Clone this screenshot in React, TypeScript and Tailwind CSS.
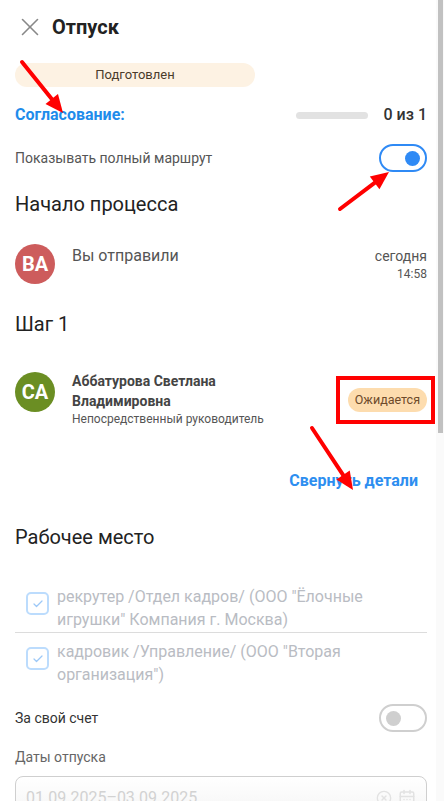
import { X, Check, CalendarDays, CircleX } from "lucide-react";

type Pt = [number, number];

function Arrow({ from, to }: { from: Pt; to: Pt }) {
  const dx = to[0] - from[0];
  const dy = to[1] - from[1];
  const len = Math.hypot(dx, dy);
  const ux = dx / len;
  const uy = dy / len;
  const head = 18;
  const half = 8;
  const bx = to[0] - ux * head;
  const by = to[1] - uy * head;
  const pts = [
    `${to[0]},${to[1]}`,
    `${bx - uy * half},${by + ux * half}`,
    `${bx + uy * half},${by - ux * half}`,
  ].join(" ");
  return (
    <g>
      <line x1={from[0]} y1={from[1]} x2={bx + ux * 2} y2={by + uy * 2} stroke="#ff0000" strokeWidth={4} strokeLinecap="round" />
      <polygon points={pts} fill="#ff0000" />
    </g>
  );
}

function Toggle({ on }: { on: boolean }) {
  return (
    <div
      className={`flex h-[28px] w-[48px] items-center rounded-full border-2 px-[5px] ${
        on ? "justify-end border-[#2f8af5]" : "justify-start border-[#cfcfcf]"
      }`}
    >
      <span className={`h-[15px] w-[15px] rounded-full ${on ? "bg-[#2f8af5]" : "bg-[#cfcfcf]"}`} />
    </div>
  );
}

function Workplace({ lines, divider }: { lines: string; divider?: boolean }) {
  return (
    <div className={`flex gap-[8px] pl-[11px] ${divider ? "border-b border-[#dcdcdc] pb-[1px]" : ""}`}>
      <span className="mt-[7px] flex h-[23px] w-[23px] shrink-0 items-center justify-center rounded-[5px] border-2 border-[#bcdcfd]">
        <Check size={12} strokeWidth={2.5} className="text-[#9cc8f7]" />
      </span>
      <p className="text-[16px] leading-[23px] text-[#b9bcc3]">{lines}</p>
    </div>
  );
}

export default function App() {
  return (
    <div className="relative flex h-[801px] w-[444px] overflow-hidden bg-white font-['Roboto',sans-serif]">
      <div className="w-[436px] pl-[15px] pr-[9px]">
        <header className="flex h-[54px] items-center gap-[7px]">
          <X size={30} strokeWidth={1.3} className="text-[#888]" />
          <h1 className="text-[20px] font-bold text-[#222]">Отпуск</h1>
        </header>

        <div className="mt-[9px] flex h-6 w-[240px] items-center justify-center rounded-full bg-[#fdf2e3] text-[13px] text-[#4a3b2b]">
          Подготовлен
        </div>

        <div className="mt-[14px] flex h-7 items-center">
          <span className="text-[16px] font-bold text-[#1f8ceb]">Согласование:</span>
          <span className="ml-auto h-[7px] w-[72px] rounded-full bg-[#e2e2e2]" />
          <span className="ml-[16px] text-[16px] font-medium text-[#333]">0 из 1</span>
        </div>

        <div className="mt-[15px] flex h-7 items-center justify-between">
          <span className="text-[14px] text-[#555]">Показывать полный маршрут</span>
          <Toggle on />
        </div>

        <h2 className="mt-[18px] text-[20px] leading-[28px] text-[#222]">Начало процесса</h2>

        <div className="mt-[26px] flex items-start gap-[17px]">
          <span className="flex h-10 w-10 shrink-0 items-center justify-center rounded-full bg-[#cd5c5c] text-[20px] font-bold text-white">
            BA
          </span>
          <span className="mt-[1px] text-[16px] leading-[22px] text-[#555]">Вы отправили</span>
          <div className="ml-auto flex flex-col items-end">
            <span className="mt-[2px] text-[14px] leading-[20px] text-[#555]">сегодня</span>
            <span className="text-[12px] leading-[16px] text-[#555]">14:58</span>
          </div>
        </div>

        <h2 className="mt-[26px] text-[20px] leading-[28px] text-[#222]">Шаг 1</h2>

        <div className="mt-[33px] flex items-start gap-[17px]">
          <span className="mt-[1px] flex h-10 w-10 shrink-0 items-center justify-center rounded-full bg-[#6b8e23] text-[20px] font-bold text-white">
            CA
          </span>
          <div className="flex-1">
            <p className="text-[14px] font-bold leading-[20px] text-[#444]">
              Аббатурова Светлана
              <br />
              Владимировна
            </p>
            <p className="text-[12px] leading-[16px] text-[#555]">Непосредственный руководитель</p>
          </div>
          <span className="mt-[17px] flex h-6 items-center rounded-full bg-[#fddcae] px-[7px] text-[12.5px] text-[#6d4a2a]">
            Ожидается
          </span>
        </div>

        <div className="mt-[42px] flex justify-end pr-[9px]">
          <span className="text-[16px] font-bold leading-[24px] text-[#2d8ef0]">Свернуть детали</span>
        </div>

        <h2 className="mt-[30px] text-[20px] leading-[28px] text-[#222]">Рабочее место</h2>

        <div className="mt-[34px]">
          <Workplace lines={'рекрутер /Отдел кадров/ (ООО "Ёлочные игрушки" Компания г. Москва)'} divider />
          <div className="pt-[7px]">
            <Workplace lines={'кадровик /Управление/ (ООО "Вторая организация")'} />
          </div>
        </div>

        <div className="mt-[18px] flex h-7 items-center justify-between">
          <span className="text-[14px] text-[#333]">За свой счет</span>
          <Toggle on={false} />
        </div>

        <p className="mt-[15px] text-[14px] leading-[20px] text-[#666]">Даты отпуска</p>

        <div className="mt-[9px] flex h-[44px] items-center rounded-[8px] border border-[#cfcfcf] bg-gradient-to-b from-white to-[#f4f4f4] px-[10px]">
          <span className="text-[16px] text-[#d2d2d2]">01.09.2025–03.09.2025</span>
          <CircleX size={16} className="ml-auto text-[#e2e2e2]" />
          <CalendarDays size={18} className="ml-[6px] text-[#e2e2e2]" />
        </div>
      </div>

      <div className="relative w-[8px] bg-[#fafafa]">
        <div className="ml-[2px] h-[433px] w-[5px] bg-[#c1c1c1]" />
      </div>

      <svg className="pointer-events-none absolute inset-0" width={444} height={801}>
        <Arrow from={[22, 62]} to={[63, 113]} />
        <Arrow from={[340, 209]} to={[389, 172]} />
        <Arrow from={[312, 428]} to={[353, 490]} />
        <rect x={338} y={378} width={95} height={44} fill="none" stroke="#ff0000" strokeWidth={4} />
      </svg>
    </div>
  );
}
